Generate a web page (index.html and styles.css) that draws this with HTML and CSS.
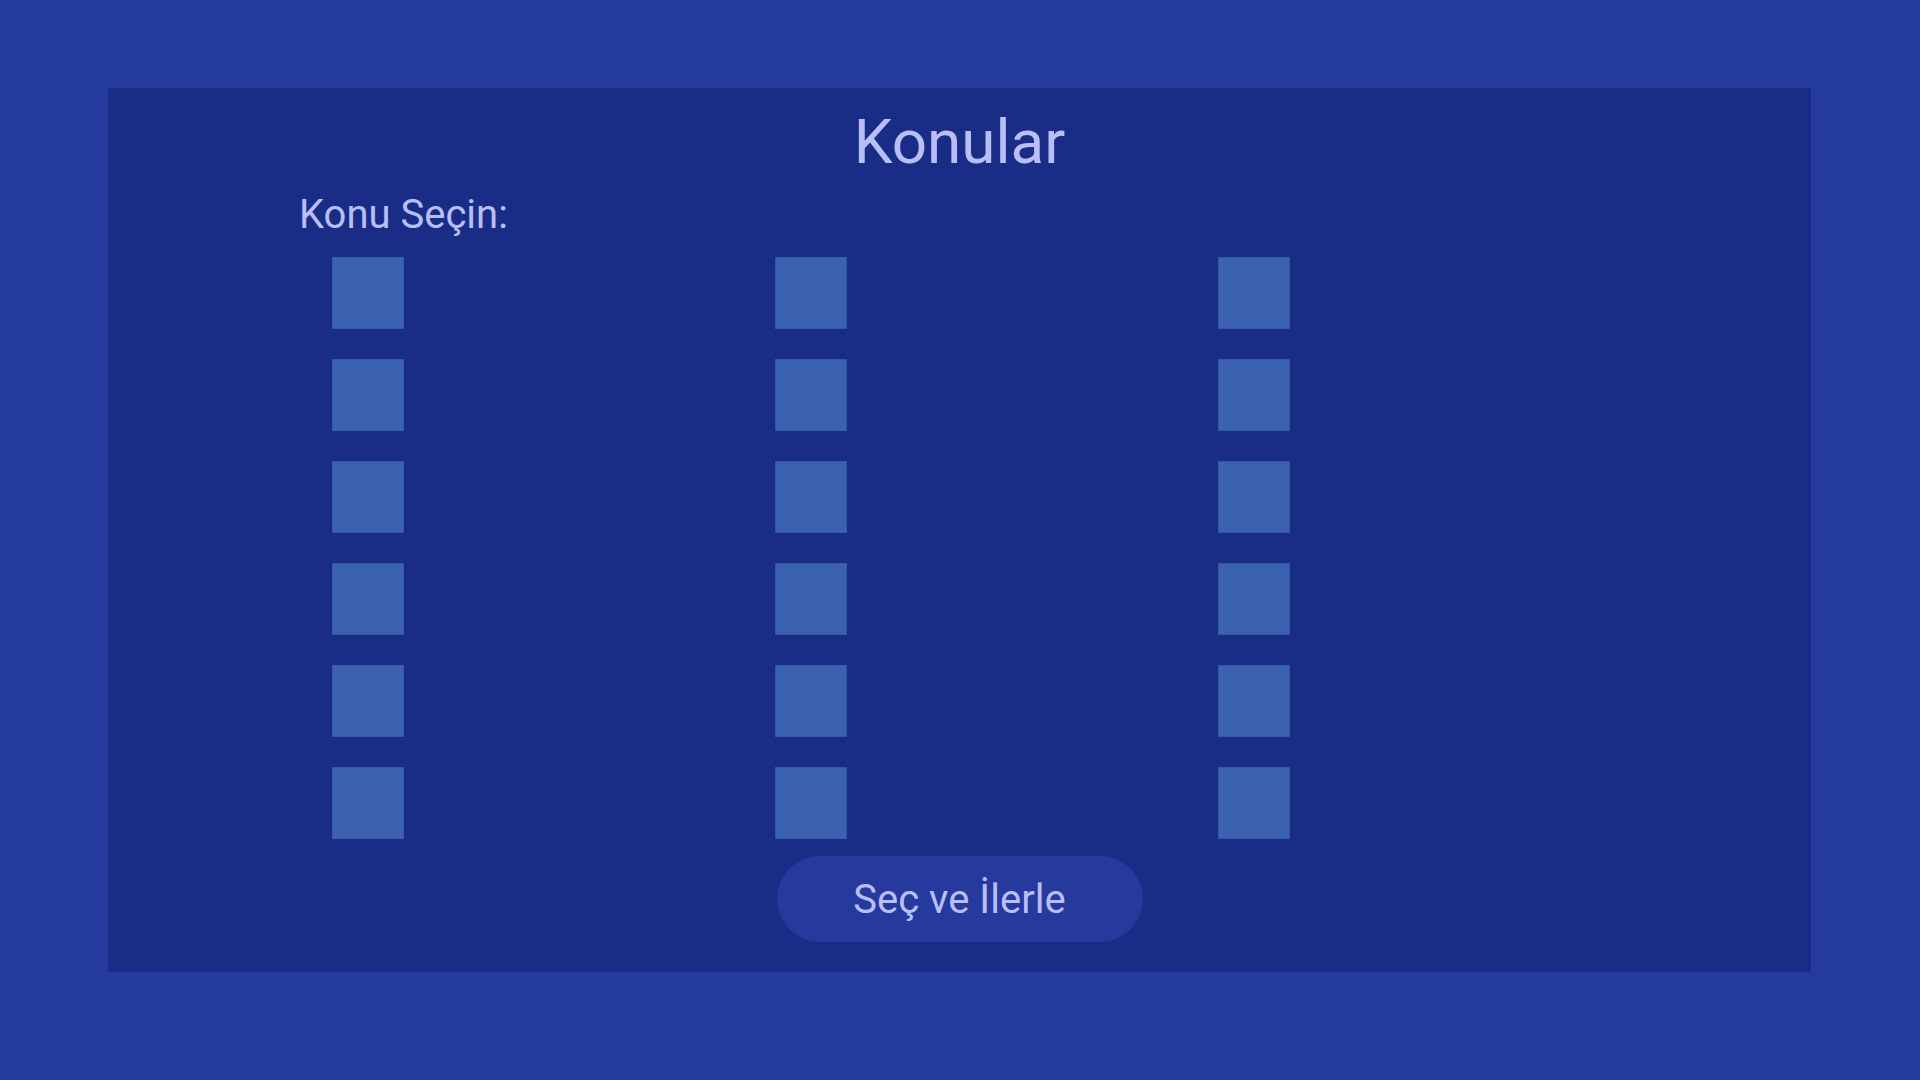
FILE: index.html
```html
<!DOCTYPE html>
<html lang="tr">
<head>
<meta charset="utf-8">
<title>Konular</title>
<link rel="stylesheet" href="styles.css">
</head>
<body>
<main class="panel">
  <h1 class="title">Konular</h1>
  <section class="topics">
    <div class="label">Konu Seçin:</div>
    <div class="grid">
      <span class="box"></span><span class="box"></span><span class="box"></span>
      <span class="box"></span><span class="box"></span><span class="box"></span>
      <span class="box"></span><span class="box"></span><span class="box"></span>
      <span class="box"></span><span class="box"></span><span class="box"></span>
      <span class="box"></span><span class="box"></span><span class="box"></span>
      <span class="box"></span><span class="box"></span><span class="box"></span>
    </div>
  </section>
  <div class="actions">
    <button class="btn">Seç ve İlerle</button>
  </div>
</main>
</body>
</html>
```
FILE: styles.css
```css
html, body {
  margin: 0;
  padding: 0;
}
body {
  background: #253a9d;
  font-family: Roboto, "Noto Sans", sans-serif;
  color: #b9bdf8;
  width: 1920px;
  height: 1080px;
  padding-top: 88px;
  box-sizing: border-box;
}
.panel {
  margin: 0 109px 0 108px;
  background: #1a2d86;
  padding: 19px 0 30px;
}
.title {
  margin: 0;
  font-size: 62px;
  font-weight: 400;
  line-height: 70px;
  text-align: center;
}
.topics {
  margin: 14px 0 0 191px;
}
.label {
  font-size: 40px;
  line-height: 48px;
}
.grid {
  display: grid;
  grid-template-columns: repeat(3, 443px);
  grid-auto-rows: 72px;
  row-gap: 30px;
  margin-top: 18px;
  padding-left: 33px;
}
.box {
  width: 72px;
  height: 72px;
  box-sizing: border-box;
  background: #3b62ae;
  border: 1px solid #3556a3;
}
.actions {
  display: flex;
  justify-content: center;
  margin-top: 17px;
}
.btn {
  width: 366px;
  height: 86px;
  border: none;
  border-radius: 43px;
  background: #263a9e;
  color: #b9bdf8;
  font-family: Roboto, "Noto Sans", sans-serif;
  font-size: 40px;
  padding: 0;
  cursor: pointer;
}
```
